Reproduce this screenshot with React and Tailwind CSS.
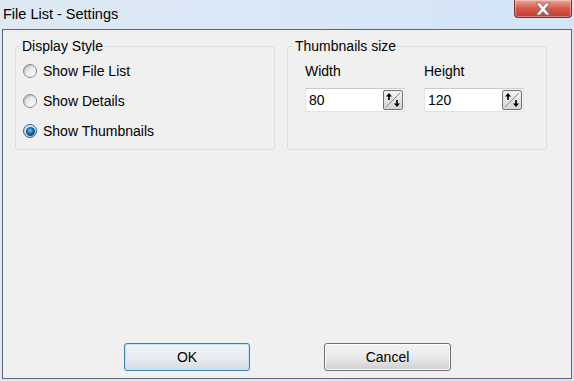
import React from 'react';

// Win7-style settings dialog
function Radio({ checked, label }) {
  return (
    <label className="flex items-center h-[20px] gap-[6px]">
      {checked ? (
        <span className="w-[14px] h-[14px] rounded-full border border-[#2c628b] bg-gradient-to-b from-[#dceaf4] to-[#b7cfe0] flex items-center justify-center">
          <span className="w-[9px] h-[9px] rounded-full bg-[radial-gradient(circle_at_45%_40%,#7fd0ff_0%,#1a64a3_40%,#062b4f_100%)]" />
        </span>
      ) : (
        <span className="w-[14px] h-[14px] rounded-full border border-[#8a8a8a] bg-gradient-to-br from-[#cfcfcf] via-[#eeeeee] to-[#ffffff] shadow-[inset_1px_1px_1px_rgba(0,0,0,0.15)]" />
      )}
      <span>{label}</span>
    </label>
  );
}

function SpinBox({ value }) {
  return (
    <div className="w-[100px] h-[24px] bg-white border border-[#e3e3e3] border-t-[#c9c9c9] flex items-center justify-between pl-[3px] pr-[1px]">
      <span>{value}</span>
      <div className="w-[20px] h-[20px] border border-[#707070] rounded-[2px] bg-gradient-to-b from-[#f2f2f2] to-[#d4d4d4]">
        <svg width="18" height="18" viewBox="0 0 18 18">
          <line x1="16" y1="2" x2="2" y2="16" stroke="#8a8a8a" strokeWidth="1" />
          <path d="M5 2 L2 5.5 H4.2 V9 H5.8 V5.5 H8 Z" fill="#000" />
          <path d="M13 16 L10 12.5 H12.2 V9 H13.8 V12.5 H16 Z" fill="#000" />
        </svg>
      </div>
    </div>
  );
}

export default function App() {
  return (
    <div
      className="w-[574px] h-[381px] flex flex-col bg-gradient-to-r from-[#dfe9f5] to-[#d3e5f8] text-[14px] text-black"
      style={{ fontFamily: '"Liberation Sans", Arial, sans-serif' }}
    >
      {/* Title bar */}
      <div className="h-[29px] flex items-start justify-between pl-[3px]">
        <span className="mt-[4px] text-[14.5px]">File List - Settings</span>
        <div className="mr-[2px] w-[58px] h-[18px] rounded-b-[4px] border border-t-0 border-[#7a3329] bg-gradient-to-b from-[#e9a597] via-[#d4584a] to-[#c13c2c] flex items-center justify-center shadow-[inset_0_0_0_1px_rgba(255,255,255,0.35)]">
          <svg width="18" height="14" viewBox="0 0 18 14">
            <path d="M2 1 H6 L9 4.5 L12 1 H16 L11 7 L16 13 H12 L9 9.5 L6 13 H2 L7 7 Z" fill="#fff" stroke="#6b6b6b" strokeWidth="0.8" strokeLinejoin="round" />
          </svg>
        </div>
      </div>

      {/* Client area */}
      <div className="flex-1 mx-[2px] mb-[2px] border border-[#5f6670] bg-[#f0f0f0] flex flex-col">
        <div className="flex gap-[12px] pl-[12px] pt-[8px]">
          <fieldset className="w-[260px] h-[112px] border border-[#d5dfe5] rounded-[3px]">
            <legend className="ml-[5px] px-[1px] leading-[16px]">Display Style</legend>
            <div className="flex flex-col gap-[10px] pt-[7px] pl-[7px]">
              <Radio label="Show File List" />
              <Radio label="Show Details" />
              <Radio checked label="Show Thumbnails" />
            </div>
          </fieldset>
          <fieldset className="w-[260px] h-[112px] border border-[#d5dfe5] rounded-[3px]">
            <legend className="ml-[6px] px-[1px] leading-[16px]">Thumbnails size</legend>
            <div className="flex gap-[19px] pt-[9px] pl-[17px]">
              <div className="flex flex-col gap-[9px]">
                <span className="leading-[16px]">Width</span>
                <SpinBox value="80" />
              </div>
              <div className="flex flex-col gap-[9px]">
                <span className="leading-[16px]">Height</span>
                <SpinBox value="120" />
              </div>
            </div>
          </fieldset>
        </div>

        <div className="flex-1" />

        <div className="flex justify-center gap-[74px] pb-[7px] pl-[1px]">
          <button className="w-[126px] h-[28px] rounded-[3px] border border-[#3c7fb1] bg-gradient-to-b from-[#f1f5f8] via-[#e8edf1] to-[#d5dce1] shadow-[inset_0_0_0_1px_#bfe3f7]">
            OK
          </button>
          <button className="w-[127px] h-[28px] rounded-[3px] border border-[#707070] bg-gradient-to-b from-[#f2f2f2] via-[#ebebeb] to-[#cfcfcf] shadow-[inset_0_0_0_1px_#fcfcfc]">
            Cancel
          </button>
        </div>
      </div>
    </div>
  );
}
